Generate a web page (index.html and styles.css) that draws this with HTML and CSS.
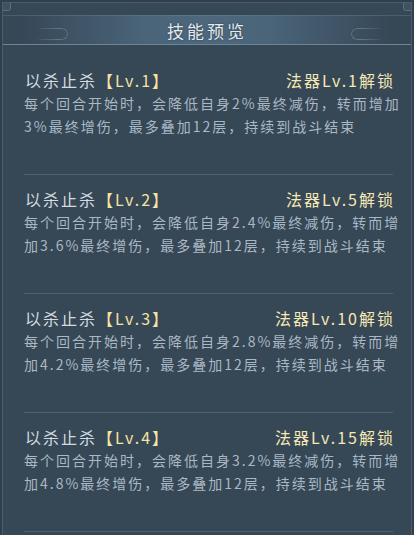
FILE: index.html
```html
<!DOCTYPE html>
<html lang="zh-CN">
<head>
    <meta charset="UTF-8">
    <meta name="viewport" content="width=device-width, initial-scale=1.0">
    <title>技能预览</title>
    <link rel="stylesheet" href="styles.css">
</head>
<body>

    <div class="panel">
        <!-- frame corners -->
        <span class="corner corner-left"></span>
        <span class="corner corner-right"></span>

        <!-- HEADER -->
        <div class="head">
            <span class="pill pill-left"></span>
            <h1>技能预览</h1>
            <span class="pill pill-right"></span>
        </div>

        <!-- SKILL LEVELS -->
        <ul class="skills">
            <li class="skill">
                <div class="skill-top">
                    <span class="name">以杀止杀<b>【Lv.1】</b></span>
                    <span class="unlock">法器Lv.1解锁</span>
                </div>
                <p class="desc">每个回合开始时，会降低自身2%最终减伤，转而增加<br>3%最终增伤，最多叠加12层，持续到战斗结束</p>
            </li>
            <li class="skill">
                <div class="skill-top">
                    <span class="name">以杀止杀<b>【Lv.2】</b></span>
                    <span class="unlock">法器Lv.5解锁</span>
                </div>
                <p class="desc">每个回合开始时，会降低自身2.4%最终减伤，转而增<br>加3.6%最终增伤，最多叠加12层，持续到战斗结束</p>
            </li>
            <li class="skill">
                <div class="skill-top">
                    <span class="name">以杀止杀<b>【Lv.3】</b></span>
                    <span class="unlock">法器Lv.10解锁</span>
                </div>
                <p class="desc">每个回合开始时，会降低自身2.8%最终减伤，转而增<br>加4.2%最终增伤，最多叠加12层，持续到战斗结束</p>
            </li>
            <li class="skill">
                <div class="skill-top">
                    <span class="name">以杀止杀<b>【Lv.4】</b></span>
                    <span class="unlock">法器Lv.15解锁</span>
                </div>
                <p class="desc">每个回合开始时，会降低自身3.2%最终减伤，转而增<br>加4.8%最终增伤，最多叠加12层，持续到战斗结束</p>
            </li>
        </ul>
    </div>

</body>
</html>
```

FILE: styles.css
```css
body {
    margin: 0;
    background-color: #2f3f4d;
    font-family: "Noto Sans CJK SC", "Noto Sans", sans-serif;
}

.panel {
    position: relative;
    height: 535px;
    overflow: hidden;
    box-sizing: border-box;
    background-color: #364756;
    border-top: 1px solid #4a5d6d;
    border-left: 1px solid #4a5d6d;
    border-right: 1px solid #4a5d6d;
    margin: 2px 2px 0 2px;
}

.corner {
    position: absolute;
    top: -3px;
    width: 9px;
    height: 9px;
    border: 1px solid #5a7080;
    border-radius: 3px;
    background-color: #3e5262;
}

.corner-left {
    left: -3px;
}

.corner-right {
    right: -3px;
}

/* title band */
.head {
    position: relative;
    margin-top: 12px;
    height: 28px;
    display: flex;
    align-items: center;
    justify-content: center;
    background: linear-gradient(to right, rgba(74, 100, 120, 0) 4%, #4a6479 35%, #4d687d 50%, #4a6479 65%, rgba(74, 100, 120, 0) 96%);
    border-top: 1px solid rgba(110, 140, 160, 0.35);
    border-bottom: 1px solid #6c8598;
}

.head h1 {
    margin: 0;
    font-size: 17px;
    font-weight: normal;
    letter-spacing: 3px;
    color: #e2eaf0;
    text-shadow: 0 0 2px #2b3a47;
}

.pill {
    position: absolute;
    top: 12px;
    width: 32px;
    height: 10px;
    border: 1px solid #5d7587;
    border-radius: 6px;
}

.pill-left {
    left: 31px;
    border-left-color: transparent;
    -webkit-mask-image: linear-gradient(to right, transparent, #000 70%);
}

.pill-right {
    right: 26px;
    border-right-color: transparent;
    -webkit-mask-image: linear-gradient(to left, transparent, #000 70%);
}

.skills {
    list-style: none;
    margin: 0;
    padding: 11px 18px 0 21px;
}

.skill {
    padding: 12px 0 36px 0;
    border-bottom: 1px solid #4f6170;
}

.skill-top {
    display: flex;
    justify-content: space-between;
    align-items: center;
    height: 24px;
    font-size: 16px;
    letter-spacing: 2px;
}

.name {
    color: #d3dbe0;
    padding-left: 1px;
}

.name b {
    font-weight: normal;
    color: #f5e3a4;
}

.unlock {
    color: #f6e8b4;
    margin-right: -2px;
}

.desc {
    margin: 0;
    font-size: 14px;
    line-height: 23px;
    letter-spacing: 2px;
    color: #aab8c3;
    white-space: nowrap;
}
```
